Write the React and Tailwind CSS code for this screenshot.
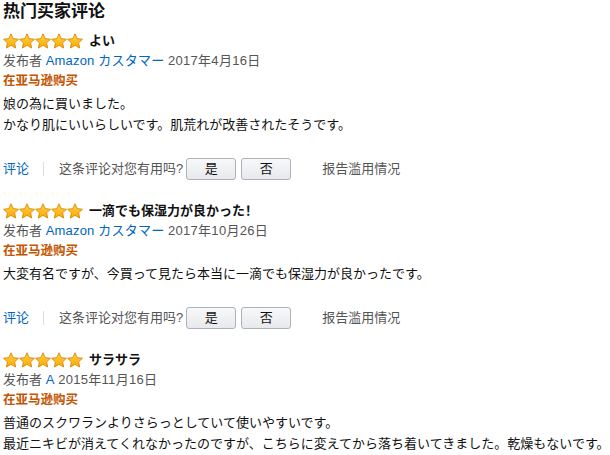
const reviews = [
  {
    title: 'よい',
    author: 'Amazon カスタマー',
    date: '2017年4月16日',
    body: ['娘の為に買いました。', 'かなり肌にいいらしいです。肌荒れが改善されたそうです。'],
    footer: true
  },
  {
    title: '一滴でも保湿力が良かった！',
    author: 'Amazon カスタマー',
    date: '2017年10月26日',
    body: ['大変有名ですが、今買って見たら本当に一滴でも保湿力が良かったです。'],
    footer: true
  },
  {
    title: 'サラサラ',
    author: 'A',
    date: '2015年11月16日',
    body: [
      '普通のスクワランよりさらっとしていて使いやすいです。',
      '最近ニキビが消えてくれなかったのですが、こちらに変えてから落ち着いてきました。乾燥もないです。'
    ],
    footer: false
  }
]

const Star = () => (
  <svg width="16" height="16" viewBox="0.6 0.4 22.8 22" className="shrink-0">
    <defs>
      <linearGradient id="starFill" x1="0" y1="0" x2="0" y2="1">
        <stop offset="0" stopColor="#ffd24a" />
        <stop offset="1" stopColor="#ffa800" />
      </linearGradient>
    </defs>
    <path
      d="M12 1.2l3.2 6.9 7.4.8-5.5 5.1 1.5 7.4L12 17.6l-6.6 3.8 1.5-7.4L1.4 8.9l7.4-.8z"
      fill="url(#starFill)"
      stroke="#d48a00"
      strokeWidth="1.3"
      strokeLinejoin="round"
    />
  </svg>
)

const VoteButton = ({ label }) => (
  <button className="w-[50px] h-[22px] rounded-[3px] border border-[#adb1b8] bg-gradient-to-b from-[#f7f8fa] to-[#e7e9ec] text-[13px] text-[#111] leading-[20px]">
    {label}
  </button>
)

const Review = ({ review, last }) => (
  <div className={last ? '' : 'mb-[21px]'}>
    <div className="flex items-center h-[20px]">
      <div className="flex">
        {[0, 1, 2, 3, 4].map(i => (
          <Star key={i} />
        ))}
      </div>
      <span className="ml-[6px] text-[13px] font-bold text-[#111]">{review.title}</span>
    </div>
    <div className="h-[20px] leading-[20px] text-[13px] text-[#555]">
      发布者 <span className="text-[#0066c0] tracking-[0.2px]">{review.author}</span>{' '}
      <span className="tracking-[0.3px]">{review.date}</span>
    </div>
    <div className="h-[20px] leading-[20px] text-[12.5px] font-bold text-[#c45500]">在亚马逊购买</div>
    <div className="mt-[2px] text-[13px] leading-[21px] text-[#111] whitespace-nowrap">
      {review.body.map((line, i) => (
        <div key={i}>{line}</div>
      ))}
    </div>
    {review.footer && (
      <div className="mt-[23px] flex items-center h-[22px] text-[13px]">
        <span className="text-[#0066c0]">评论</span>
        <span className="ml-[14px] w-px h-[14px] bg-[#ddd]"></span>
        <span className="ml-[15px] text-[#555]">这条评论对您有用吗?</span>
        <div className="ml-[3px] flex gap-[5px]">
          <VoteButton label="是" />
          <VoteButton label="否" />
        </div>
        <span className="ml-[31px] text-[#555]">报告滥用情况</span>
      </div>
    )}
  </div>
)

export default function App() {
  return (
    <div
      className="w-[610px] h-[455px] overflow-hidden bg-white pl-[3px]"
      style={{ fontFamily: '"Liberation Sans", "Noto Sans CJK SC", "Noto Sans CJK JP", sans-serif' }}
    >
      <h3 className="text-[17px] font-bold leading-[24px] text-[#111] mb-[7px]">热门买家评论</h3>
      {reviews.map((r, i) => (
        <Review key={i} review={r} last={i === reviews.length - 1} />
      ))}
    </div>
  )
}
